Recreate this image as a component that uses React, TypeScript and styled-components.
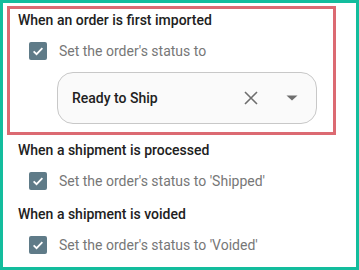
import styled, {createGlobalStyle} from "styled-components";

const GlobalStyle = createGlobalStyle`
    html, body {
        margin: 0;
        padding: 0;
        background: #ffffff;
    }
    body {
        font-family: Roboto, "Noto Sans", "Liberation Sans", sans-serif;
    }
`

const Frame = styled.div`
    box-sizing: border-box;
    width: 359px;
    height: 270px;
    border: 3px solid #13bd9d;
    padding: 3px 20px 0 4px;
`

const Section = styled.section<{highlighted?: boolean}>`
    box-sizing: border-box;
    display: flex;
    flex-direction: column;
    border: 3px solid ${p => p.highlighted ? '#dc6a72' : 'transparent'};
    padding: ${p => p.highlighted ? '1px 8px 8px 8px' : '2px 8px 3px 8px'};
`

const Title = styled.h3`
    margin: 0;
    font-size: 14px;
    line-height: 20px;
    font-weight: 500;
    color: #212121;
`

const CheckRow = styled.label`
    display: flex;
    align-items: center;
    gap: 12px;
    height: 24px;
    margin-top: 9px;
    padding-left: 11px;
    font-size: 14px;
    color: #777777;
`

const Box = styled.span`
    display: flex;
    align-items: center;
    justify-content: center;
    width: 18px;
    height: 18px;
    border-radius: 2px;
    background: #5f7b88;
    flex-shrink: 0;
`

const Select = styled.div`
    box-sizing: border-box;
    display: flex;
    align-items: center;
    width: 260px;
    height: 52px;
    margin: 9px 0 0 39px;
    padding: 0 18px 0 14px;
    border: 1px solid #c8c8c8;
    border-radius: 16px;
    background: #fafafa;
`

const SelectValue = styled.span`
    flex: 1;
    font-size: 14px;
    font-weight: 500;
    color: #212121;
`

const ClearButton = styled.span`
    display: flex;
    align-items: center;
    justify-content: center;
    margin-right: 28px;
    color: #6e6e6e;
`

const ArrowButton = styled.span`
    display: flex;
    align-items: center;
    justify-content: center;
    color: #6e6e6e;
`

const Check = () => (
    <Box>
        <svg width="14" height="14" viewBox="0 0 24 24">
            <path d="M4.5 12.5l5 5L19.5 7" fill="none" stroke="#ffffff" strokeWidth="3"/>
        </svg>
    </Box>
)

export default function App() {
    return (
        <>
            <GlobalStyle/>
            <Frame>
                <Section highlighted>
                    <Title>When an order is first imported</Title>
                    <CheckRow><Check/>Set the order's status to</CheckRow>
                    <Select>
                        <SelectValue>Ready to Ship</SelectValue>
                        <ClearButton>
                            <svg width="14" height="14" viewBox="0 0 14 14">
                                <path d="M1 1l12 12M13 1L1 13" stroke="currentColor" strokeWidth="1.6"/>
                            </svg>
                        </ClearButton>
                        <ArrowButton>
                            <svg width="12" height="6" viewBox="0 0 12 6">
                                <path d="M0.5 0.5h11L6 5.5z" fill="currentColor"/>
                            </svg>
                        </ArrowButton>
                    </Select>
                </Section>
                <Section>
                    <Title>When a shipment is processed</Title>
                    <CheckRow><Check/>Set the order's status to 'Shipped'</CheckRow>
                </Section>
                <Section>
                    <Title>When a shipment is voided</Title>
                    <CheckRow><Check/>Set the order's status to 'Voided'</CheckRow>
                </Section>
            </Frame>
        </>
    );
}
